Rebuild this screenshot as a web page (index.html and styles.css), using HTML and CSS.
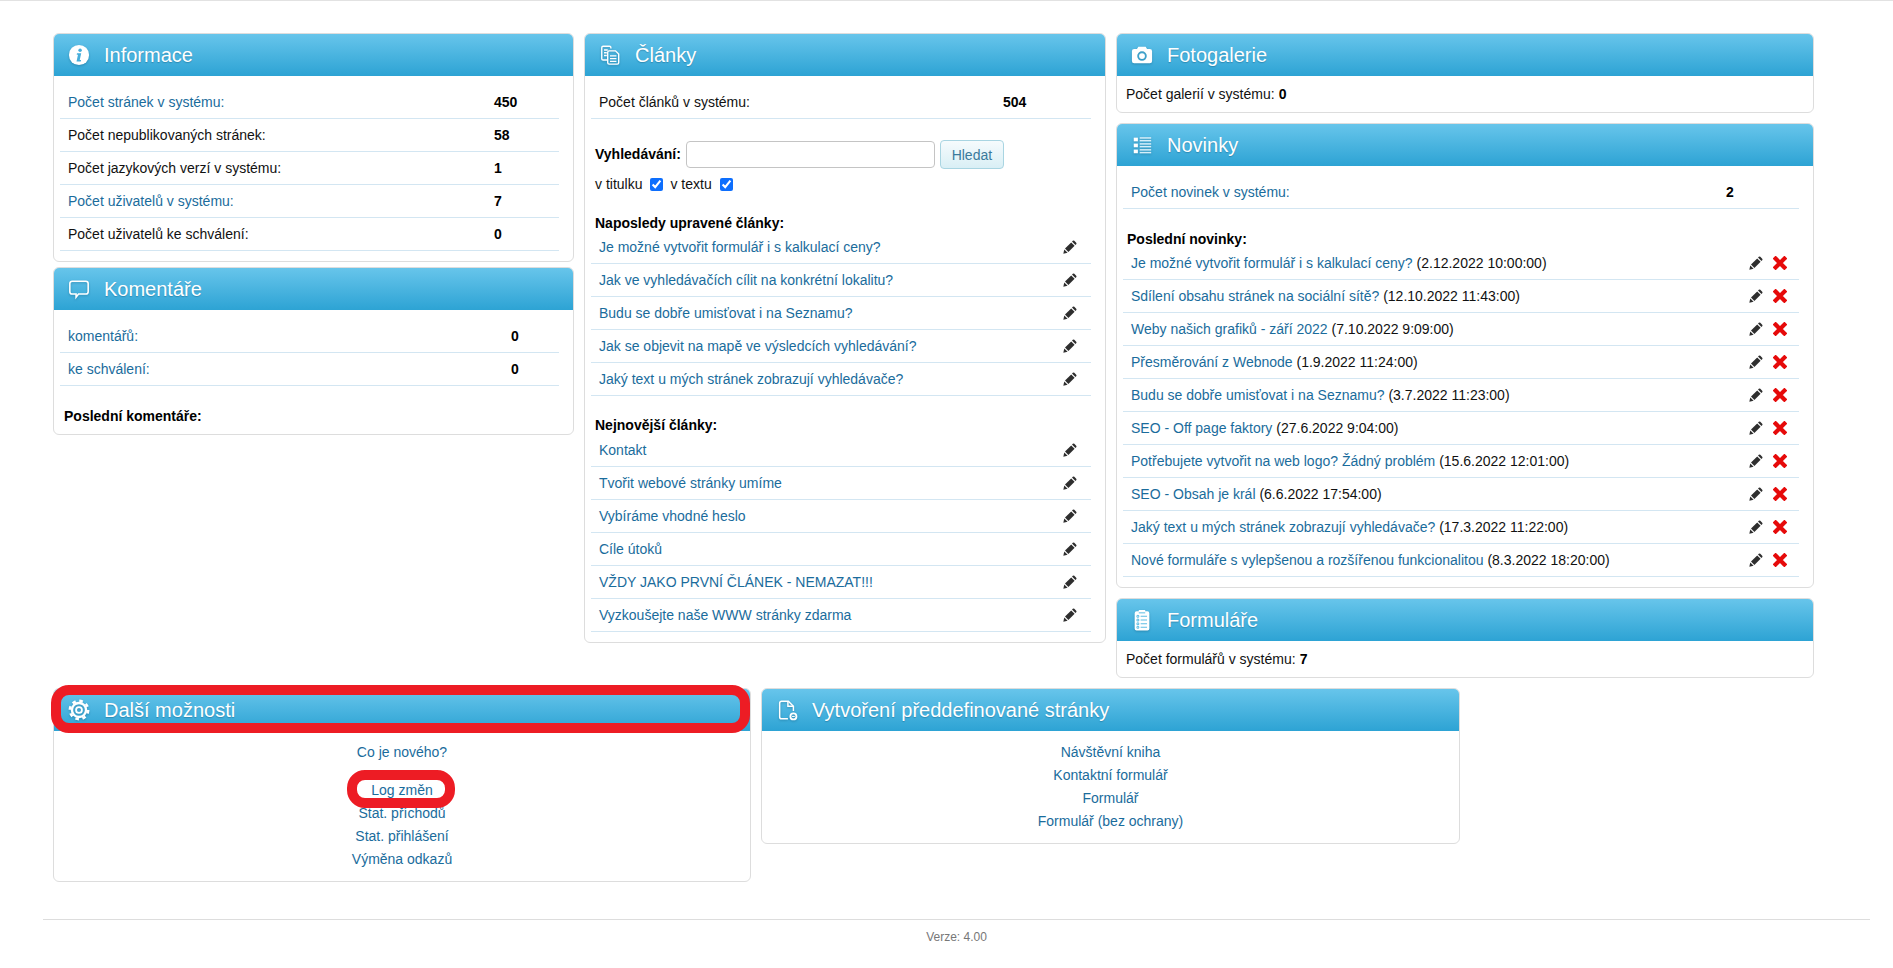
FILE: index.html
```html
<!DOCTYPE html>
<html lang="cs">
<head>
<meta charset="utf-8">
<title>Administrace</title>
<link rel="stylesheet" href="styles.css">
</head>
<body>
<svg class="defs" width="0" height="0" aria-hidden="true">
  <symbol id="pencil" viewBox="0 0 14 14">
    <path d="M.3 13.7l1-4.300 3.300 3.300z"/>
    <path d="M2 8.600l6.200-6.200 3.400 3.400-6.200 6.200z"/>
    <path d="M9 1.600l.8-.8a1.100 1.100 0 0 1 1.500 0l1.900 1.900a1.100 1.100 0 0 1 0 1.500l-.8.8z"/>
  </symbol>
  <symbol id="cross" viewBox="0 0 14 14">
    <path d="M2.600 2.600l8.800 8.800M11.400 2.600l-8.800 8.800" fill="none" stroke="#e60a0a" stroke-width="4.200" stroke-linecap="square"/>
  </symbol>
</svg>

<main class="page">
  <div class="top-row">
    <div class="col col-a">
      <section class="panel">
        <h2 class="panel-head">
          <svg class="ico" viewBox="0 0 24 24"><circle cx="12" cy="12" r="11" fill="#fff"/><circle cx="13.200" cy="6.800" r="1.900" fill="#46aedb"/><path d="M9.800 10.200h4.600l-1.600 7.200h1.500l-.4 1.600H9.300l1.600-7.200H9.500z" fill="#46aedb"/></svg>
          <span>Informace</span>
        </h2>
        <div class="list pad-b10">
          <div class="stat stat-info"><a href="#">Počet stránek v systému:</a><b>450</b></div>
          <div class="stat stat-info"><span>Počet nepublikovaných stránek:</span><b>58</b></div>
          <div class="stat stat-info"><span>Počet jazykových verzí v systému:</span><b>1</b></div>
          <div class="stat stat-info"><a href="#">Počet uživatelů v systému:</a><b>7</b></div>
          <div class="stat stat-info"><span>Počet uživatelů ke schválení:</span><b>0</b></div>
        </div>
      </section>
      <section class="panel panel-tight">
        <h2 class="panel-head">
          <svg class="ico" viewBox="0 0 24 24"><path d="M4.500 3.500h15a2.500 2.500 0 0 1 2.500 2.500v9a2.500 2.500 0 0 1-2.500 2.500h-8l-2.700 3.500v-3.500H4.500A2.500 2.500 0 0 1 2 15V6a2.500 2.500 0 0 1 2.500-2.500z" fill="none" stroke="#fff" stroke-width="1.700"/></svg>
          <span>Komentáře</span>
        </h2>
        <div class="list">
          <div class="stat stat-comment"><a href="#">komentářů:</a><b>0</b></div>
          <div class="stat stat-comment"><a href="#">ke schválení:</a><b>0</b></div>
          <h3 class="sub sub-last">Poslední komentáře:</h3>
        </div>
      </section>
    </div>

    <div class="col col-b">
      <section class="panel">
        <h2 class="panel-head">
          <svg class="ico" viewBox="0 0 24 24" fill="none" stroke="#fff" stroke-width="1.500"><path d="M13 5V4a1.500 1.500 0 0 0-1.500-1.500h-7A1.500 1.500 0 0 0 3 4v12a1.500 1.500 0 0 0 1.500 1.500H9"/><path d="M5.500 6.500h4M5.500 9.500h3M5.500 12.500h3"/><path d="M11 7.500h7l3.500 3.500v9.500a1.500 1.500 0 0 1-1.500 1.500h-9a1.500 1.500 0 0 1-1.500-1.500V9a1.500 1.500 0 0 1 1.500-1.500z"/><path d="M12 13h7M12 16h7M12 19h7"/></svg>
          <span>Články</span>
        </h2>
        <div class="list pad-b10">
          <div class="stat stat-article"><span>Počet článků v systému:</span><b>504</b></div>
          <form class="search">
            <label class="search-label" for="q">Vyhledávání:</label>
            <input class="search-input" id="q" type="text">
            <button class="search-btn" type="button">Hledat</button>
          </form>
          <div class="scope">
            <label for="t">v titulku</label><input class="check" id="t" type="checkbox" checked>
            <label for="x">v textu</label><input class="check" id="x" type="checkbox" checked>
          </div>
          <h3 class="sub sub-first">Naposledy upravené články:</h3>
          <div class="item"><a href="#">Je možné vytvořit formulář i s kalkulací ceny?</a><svg class="tool pencil"><use href="#pencil"/></svg></div>
          <div class="item"><a href="#">Jak ve vyhledávačích cílit na konkrétní lokalitu?</a><svg class="tool pencil"><use href="#pencil"/></svg></div>
          <div class="item"><a href="#">Budu se dobře umisťovat i na Seznamu?</a><svg class="tool pencil"><use href="#pencil"/></svg></div>
          <div class="item"><a href="#">Jak se objevit na mapě ve výsledcích vyhledávání?</a><svg class="tool pencil"><use href="#pencil"/></svg></div>
          <div class="item"><a href="#">Jaký text u mých stránek zobrazují vyhledávače?</a><svg class="tool pencil"><use href="#pencil"/></svg></div>
          <h3 class="sub">Nejnovější články:</h3>
          <div class="item"><a href="#">Kontakt</a><svg class="tool pencil"><use href="#pencil"/></svg></div>
          <div class="item"><a href="#">Tvořit webové stránky umíme</a><svg class="tool pencil"><use href="#pencil"/></svg></div>
          <div class="item"><a href="#">Vybíráme vhodné heslo</a><svg class="tool pencil"><use href="#pencil"/></svg></div>
          <div class="item"><a href="#">Cíle útoků</a><svg class="tool pencil"><use href="#pencil"/></svg></div>
          <div class="item"><a href="#">VŽDY JAKO PRVNÍ ČLÁNEK - NEMAZAT!!!</a><svg class="tool pencil"><use href="#pencil"/></svg></div>
          <div class="item"><a href="#">Vyzkoušejte naše WWW stránky zdarma</a><svg class="tool pencil"><use href="#pencil"/></svg></div>
        </div>
      </section>
    </div>

    <div class="col col-c">
      <section class="panel">
        <h2 class="panel-head">
          <svg class="ico" viewBox="0 0 24 24"><path fill="#fff" fill-rule="evenodd" d="M3.500 5.500h3l1.500-2.500h8l1.500 2.500h3a2.500 2.500 0 0 1 2.500 2.500v10.500a2.500 2.500 0 0 1-2.500 2.500h-17a2.500 2.500 0 0 1-2.500-2.500V8a2.500 2.500 0 0 1 2.500-2.500zM12 8a5.200 5.200 0 1 0 0 10.400A5.200 5.200 0 0 0 12 8zm0 2a3.200 3.200 0 1 1 0 6.400 3.200 3.200 0 0 1 0-6.400z"/></svg>
          <span>Fotogalerie</span>
        </h2>
        <p class="line">Počet galerií v systému: <b>0</b></p>
      </section>
      <section class="panel panel-gap">
        <h2 class="panel-head">
          <svg class="ico" viewBox="0 0 24 24" fill="#fff"><rect x="3" y="4" width="4.500" height="4"/><rect x="3" y="10.500" width="4.500" height="4"/><rect x="3" y="17" width="4.500" height="4"/><g fill="#d6effa"><rect x="9.500" y="3.500" width="12.500" height="1.600"/><rect x="9.500" y="6.500" width="12.500" height="1.600"/><rect x="9.500" y="10" width="12.500" height="1.600"/><rect x="9.500" y="13" width="12.500" height="1.600"/><rect x="9.500" y="16.500" width="12.500" height="1.600"/><rect x="9.500" y="19.500" width="12.500" height="1.600"/></g></svg>
          <span>Novinky</span>
        </h2>
        <div class="list pad-b10">
          <div class="stat stat-news"><a href="#">Počet novinek v systému:</a><b>2</b></div>
          <h3 class="sub sub-news">Poslední novinky:</h3>
          <div class="item item-news"><span><a href="#">Je možné vytvořit formulář i s kalkulací ceny?</a> (2.12.2022 10:00:00)</span><span class="tools"><svg class="tool pencil"><use href="#pencil"/></svg><svg class="tool"><use href="#cross"/></svg></span></div>
          <div class="item item-news"><span><a href="#">Sdílení obsahu stránek na sociální sítě?</a> (12.10.2022 11:43:00)</span><span class="tools"><svg class="tool pencil"><use href="#pencil"/></svg><svg class="tool"><use href="#cross"/></svg></span></div>
          <div class="item item-news"><span><a href="#">Weby našich grafiků - září 2022</a> (7.10.2022 9:09:00)</span><span class="tools"><svg class="tool pencil"><use href="#pencil"/></svg><svg class="tool"><use href="#cross"/></svg></span></div>
          <div class="item item-news"><span><a href="#">Přesměrování z Webnode</a> (1.9.2022 11:24:00)</span><span class="tools"><svg class="tool pencil"><use href="#pencil"/></svg><svg class="tool"><use href="#cross"/></svg></span></div>
          <div class="item item-news"><span><a href="#">Budu se dobře umisťovat i na Seznamu?</a> (3.7.2022 11:23:00)</span><span class="tools"><svg class="tool pencil"><use href="#pencil"/></svg><svg class="tool"><use href="#cross"/></svg></span></div>
          <div class="item item-news"><span><a href="#">SEO - Off page faktory</a> (27.6.2022 9:04:00)</span><span class="tools"><svg class="tool pencil"><use href="#pencil"/></svg><svg class="tool"><use href="#cross"/></svg></span></div>
          <div class="item item-news"><span><a href="#">Potřebujete vytvořit na web logo? Žádný problém</a> (15.6.2022 12:01:00)</span><span class="tools"><svg class="tool pencil"><use href="#pencil"/></svg><svg class="tool"><use href="#cross"/></svg></span></div>
          <div class="item item-news"><span><a href="#">SEO - Obsah je král</a> (6.6.2022 17:54:00)</span><span class="tools"><svg class="tool pencil"><use href="#pencil"/></svg><svg class="tool"><use href="#cross"/></svg></span></div>
          <div class="item item-news"><span><a href="#">Jaký text u mých stránek zobrazují vyhledávače?</a> (17.3.2022 11:22:00)</span><span class="tools"><svg class="tool pencil"><use href="#pencil"/></svg><svg class="tool"><use href="#cross"/></svg></span></div>
          <div class="item item-news"><span><a href="#">Nové formuláře s vylepšenou a rozšířenou funkcionalitou</a> (8.3.2022 18:20:00)</span><span class="tools"><svg class="tool pencil"><use href="#pencil"/></svg><svg class="tool"><use href="#cross"/></svg></span></div>
        </div>
      </section>
      <section class="panel panel-gap">
        <h2 class="panel-head">
          <svg class="ico" viewBox="0 0 24 24"><path fill="#fff" d="M6 2.500h2.500V1h7v1.500H18a2 2 0 0 1 2 2v17a2 2 0 0 1-2 2H6a2 2 0 0 1-2-2v-17a2 2 0 0 1 2-2z"/><g fill="none" stroke="#5dbde4" stroke-width="1.100"><path d="M8.500 4.200h7"/><circle cx="7.500" cy="8" r="1.100"/><circle cx="7.500" cy="12" r="1.100"/><circle cx="7.500" cy="16" r="1.100"/><circle cx="7.500" cy="20" r="1.100"/><path d="M10.500 8h7M10.500 12h7M10.500 16h7M10.500 20h7"/></g></svg>
          <span>Formuláře</span>
        </h2>
        <p class="line">Počet formulářů v systému: <b>7</b></p>
      </section>
    </div>
  </div>

  <div class="bottom-row">
    <section class="panel panel-left">
      <h2 class="panel-head">
        <svg class="ico" viewBox="0 0 24 24" fill="none" stroke="#fff"><circle cx="12" cy="12" r="10" stroke-width="2.800" stroke-dasharray="3.900 3.954"/><circle cx="12" cy="12" r="7.700" stroke-width="2.600"/><circle cx="12" cy="12" r="3.200" stroke-width="2"/></svg>
        <span>Další možnosti</span>
      </h2>
      <ul class="links">
        <li class="links-first"><a href="#">Co je nového?</a></li>
        <li><a href="#">Log změn</a></li>
        <li><a href="#">Stat. příchodů</a></li>
        <li><a href="#">Stat. přihlášení</a></li>
        <li><a href="#">Výměna odkazů</a></li>
      </ul>
      <div class="mark mark-head"></div>
      <div class="mark mark-log"></div>
    </section>
    <section class="panel panel-right">
      <h2 class="panel-head">
        <svg class="ico" viewBox="0 0 24 24" fill="none" stroke="#fff" stroke-width="1.600"><path d="M13 21.500H6A2 2 0 0 1 4 19.500V4.500a2 2 0 0 1 2-2h7.500L19 8v5"/><path d="M13 2.500V8h6"/><circle cx="19" cy="19" r="3.300" stroke-width="2"/><path d="M17.500 19h3" stroke-width="1.200"/></svg>
        <span>Vytvoření předdefinované stránky</span>
      </h2>
      <ul class="links">
        <li><a href="#">Návštěvní kniha</a></li>
        <li><a href="#">Kontaktní formulář</a></li>
        <li><a href="#">Formulář</a></li>
        <li><a href="#">Formulář (bez ochrany)</a></li>
      </ul>
    </section>
  </div>

  <footer class="foot">Verze: 4.00</footer>
</main>
</body>
</html>
```

FILE: styles.css
```css
* { box-sizing: border-box; }

html, body { margin: 0; padding: 0; }

body {
  background: #fff;
  color: #111;
  font: 14px/19px "Liberation Sans", Arial, sans-serif;
  border-top: 1px solid #e2e2e2;
}

a { color: #1a6c9c; text-decoration: none; }

.defs { position: absolute; }

.page { padding: 32px 23px 0 43px; }

.top-row {
  display: flex;
  align-items: flex-start;
  gap: 10px;
  padding-left: 10px;
}

.col-a { width: 521px; flex: none; }
.col-b { width: 522px; flex: none; }
.col-c { width: 698px; flex: none; }

.panel {
  position: relative;
  background: #fff;
  border: 1px solid #ddd;
  border-radius: 6px;
}

.panel-tight { margin-top: 5px; }
.panel-gap { margin-top: 10px; }

.panel-head {
  display: flex;
  align-items: center;
  gap: 14px;
  height: 42px;
  margin: 0;
  padding-left: 14px;
  border-radius: 5px 5px 0 0;
  background: linear-gradient(#67c5eb, #2da3d4);
  color: #fff;
  font-size: 20px;
  font-weight: 400;
  text-shadow: 0 1px 1px rgba(0, 60, 90, .3);
}

.ico {
  width: 22px;
  height: 22px;
  flex: none;
  filter: drop-shadow(0 1px 1px rgba(0, 60, 90, .3));
}

.list { padding: 10px 14px 8px 6px; }
.pad-b10 { padding-bottom: 10px; }

.stat {
  display: grid;
  align-items: center;
  height: 33px;
  padding-left: 8px;
  border-bottom: 1px solid #d3e6f2;
}

.stat-info { grid-template-columns: 426px 1fr; }
.stat-comment { grid-template-columns: 443px 1fr; }
.stat-article { grid-template-columns: 404px 1fr; }
.stat-news { grid-template-columns: 595px 1fr; }

.stat b { color: #000; }

.sub {
  height: 17px;
  margin: 21px 0 0 4px;
  color: #000;
  font-size: 14px;
  line-height: 17px;
  font-weight: 700;
}

.sub-first { height: 16px; }
.sub-news { margin-top: 22px; height: 16px; }
.sub-last { margin-top: 20px; height: 20px; line-height: 20px; }

.item {
  display: flex;
  align-items: center;
  justify-content: space-between;
  height: 33px;
  padding: 0 14px 0 8px;
  border-bottom: 1px solid #d3e6f2;
}

.item-news { padding-right: 12px; }

.tools { display: flex; gap: 10px; }

.tool { width: 14px; height: 14px; flex: none; }
.pencil { fill: #2e2e2e; }

.search {
  display: flex;
  align-items: center;
  gap: 5px;
  height: 29px;
  margin: 21px 0 0 4px;
}

.search-label { font-weight: 700; color: #000; }

.search-input {
  width: 249px;
  height: 27px;
  padding: 0 6px;
  border: 1px solid #c4c4c4;
  border-radius: 4px;
  background: #fff;
}

.search-btn {
  width: 64px;
  height: 29px;
  padding: 0;
  border: 1px solid #a9d5e2;
  border-radius: 4px;
  background: linear-gradient(#f6fbfd, #d9eff5);
  color: #3a7a9c;
  font: 14px "Liberation Sans", Arial, sans-serif;
}

.scope {
  display: flex;
  align-items: center;
  height: 20px;
  margin: 5px 0 0 4px;
}

.check {
  width: 13px;
  height: 13px;
  margin: 0 7px 0 8px;
  accent-color: #0d6efd;
}

.line {
  display: flex;
  align-items: center;
  gap: 4px;
  height: 36px;
  margin: 0;
  padding-left: 9px;
}

.line b { color: #000; }

.bottom-row {
  display: flex;
  align-items: flex-start;
  gap: 10px;
  margin-top: 10px;
  padding-left: 10px;
}

.panel-left { width: 698px; flex: none; }
.panel-right { width: 699px; flex: none; }

.links {
  margin: 0;
  padding: 10px 0;
  list-style: none;
  text-align: center;
  line-height: 23px;
}

.links-first { margin-bottom: 15px; }

.mark {
  position: absolute;
  border: 10px solid #ed1c24;
  border-radius: 18px;
  pointer-events: none;
}

.mark-head {
  left: -3px;
  top: -4px;
  width: 699px;
  height: 48px;
}

.mark-log {
  left: 293px;
  top: 81px;
  width: 108px;
  height: 38px;
}

.foot {
  width: 1827px;
  margin-top: 37px;
  padding-top: 9px;
  border-top: 1px solid #ddd;
  color: #777;
  font-size: 12px;
  line-height: 17px;
  text-align: center;
}
```
